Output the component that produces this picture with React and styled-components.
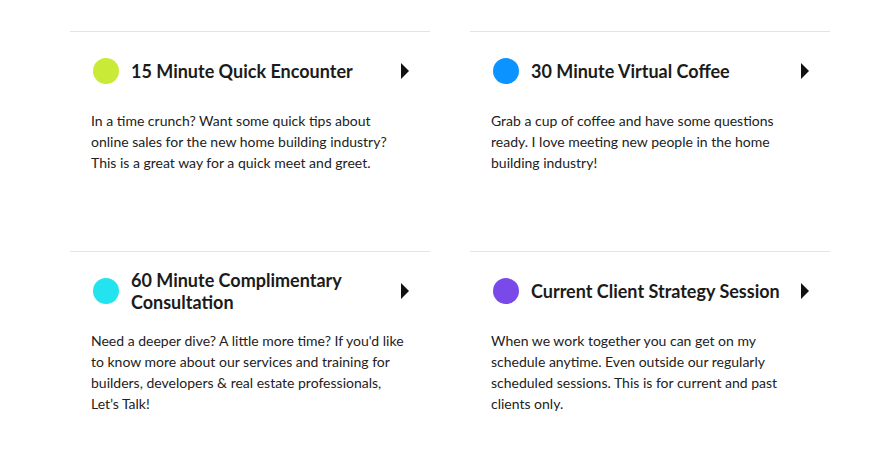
import React from "react";
import styled, { createGlobalStyle } from "styled-components";

const Global = createGlobalStyle`
  html, body { margin: 0; padding: 0; background: #fff; }
  body { font-family: "Lato", "Noto Sans", sans-serif; }
`;

const Page = styled.div`
  width: 875px;
  height: 465px;
  box-sizing: border-box;
  padding: 31px 45px 0 70px;
`;

const Grid = styled.div`
  display: grid;
  grid-template-columns: 360px 360px;
  column-gap: 40px;
`;

const Card = styled.div`
  height: 220px;
  box-sizing: border-box;
  border-top: 1px solid #e4e4e4;
  padding: 17px 21px 0 21px;
`;

const Header = styled.div`
  display: flex;
  align-items: center;
  height: 44px;
`;

const Dot = styled.span`
  flex: none;
  width: 26px;
  height: 26px;
  border-radius: 50%;
  background: ${(p) => p.$color};
  margin: 0 12px 0 2px;
`;

const Title = styled.h3`
  flex: 1;
  margin: 0;
  font-family: "Lato", sans-serif;
  font-weight: 700;
  font-size: 18px;
  line-height: 22px;
  color: #1b1b1b;
  padding-right: 6px;
`;

const Arrow = styled.span`
  flex: none;
  width: 0;
  height: 0;
  border-top: 8px solid transparent;
  border-bottom: 8px solid transparent;
  border-left: 8px solid #111;
  margin-right: 0;
`;

const Desc = styled.p`
  margin: 17px 0 0 0;
  font-family: "Lato", sans-serif;
  font-size: 14px;
  line-height: 21px;
  color: #222;
`;

const items = [
  {
    color: "#c9ea36",
    title: "15 Minute Quick Encounter",
    text: "In a time crunch? Want some quick tips about online sales for the new home building industry? This is a great way for a quick meet and greet.",
  },
  {
    color: "#0b93ff",
    title: "30 Minute Virtual Coffee",
    text: "Grab a cup of coffee and have some questions ready. I love meeting new people in the home building industry!",
  },
  {
    color: "#22e3ee",
    title: "60 Minute Complimentary Consultation",
    text: "Need a deeper dive? A little more time? If you'd like to know more about our services and training for builders, developers & real estate professionals, Let’s Talk!",
  },
  {
    color: "#7a49ea",
    title: "Current Client Strategy Session",
    text: "When we work together you can get on my schedule anytime. Even outside our regularly scheduled sessions. This is for current and past clients only.",
  },
];

export default function App() {
  return (
    <>
      <Global />
      <Page>
        <Grid>
          {items.map((it) => (
            <Card key={it.title}>
              <Header>
                <Dot $color={it.color} />
                <Title>{it.title}</Title>
                <Arrow />
              </Header>
              <Desc>{it.text}</Desc>
            </Card>
          ))}
        </Grid>
      </Page>
    </>
  );
}
